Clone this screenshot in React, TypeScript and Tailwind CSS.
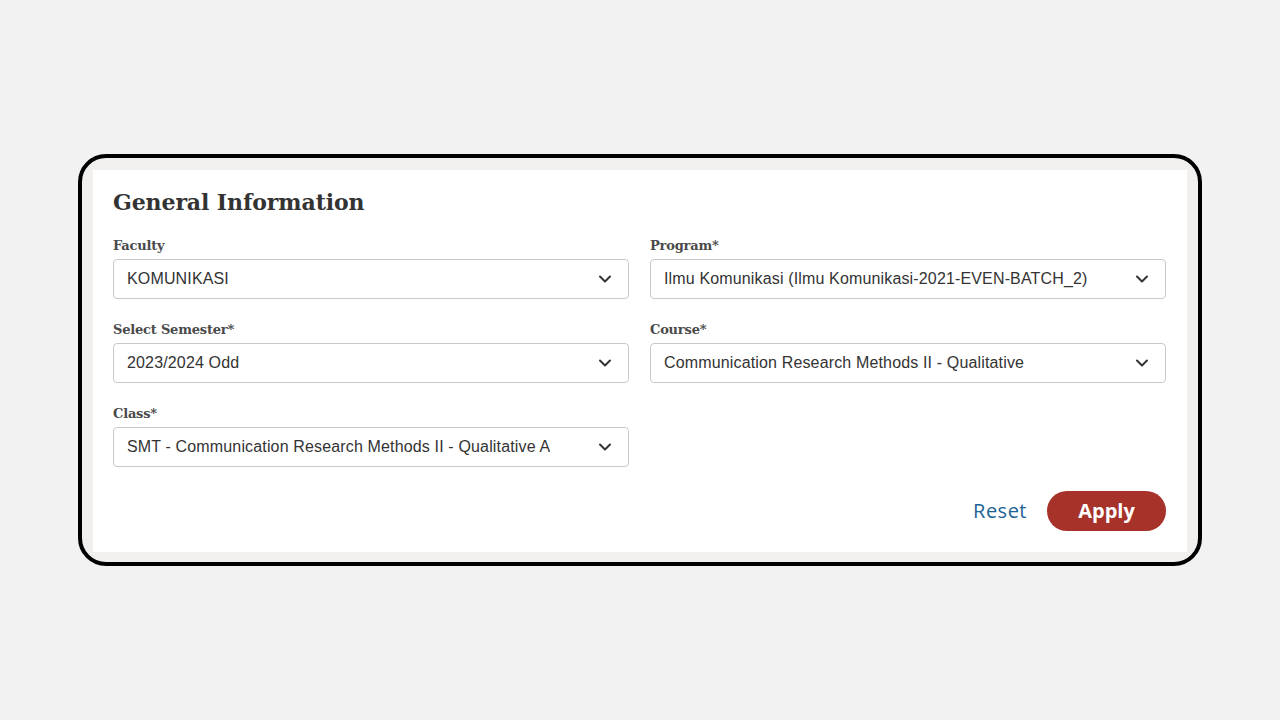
import { ChevronDown } from 'lucide-react';

const FIELDS = [
  { label: 'Faculty', value: 'KOMUNIKASI' },
  { label: 'Program*', value: 'Ilmu Komunikasi (Ilmu Komunikasi-2021-EVEN-BATCH_2)' },
  { label: 'Select Semester*', value: '2023/2024 Odd' },
  { label: 'Course*', value: 'Communication Research Methods II - Qualitative' },
  { label: 'Class*', value: 'SMT - Communication Research Methods II - Qualitative A' },
];

const slab = { fontFamily: '"DejaVu Serif", "Liberation Serif", serif' };

function SelectField({ label, value }: { label: string; value: string }) {
  return (
    <div className="flex flex-col">
      <label
        className="text-[13px] font-bold leading-[18px] text-[#4a4a4a] mb-[4px] tracking-[-0.2px]"
        style={slab}
      >
        {label}
      </label>
      <div className="h-[40px] flex items-center justify-between border border-[#c9c9c9] rounded-[4px] bg-white pl-[13px] pr-[14px]">
        <span className="text-[16px] text-[#333] tracking-[0.15px] font-['Liberation_Sans',Arial,sans-serif] truncate">
          {value}
        </span>
        <ChevronDown size={20} strokeWidth={2.4} className="text-[#333] shrink-0 translate-x-[1px]" />
      </div>
    </div>
  );
}

export default function App() {
  return (
    <div className="min-h-screen w-full bg-[#f2f2f2] flex items-start justify-center pt-[154px]">
      <div className="w-[1124px] border-[4px] border-black rounded-[28px] bg-[#f1f0ef] pl-[11px] pr-[11px] pt-[12px] pb-[10px]">
        <div className="bg-white pl-[20px] pr-[21px] pt-[16px] pb-[21px]">
          <h2 className="text-[22px] font-bold leading-[32px] text-[#333] tracking-[-0.1px]" style={slab}>
            General Information
          </h2>
          <div className="grid grid-cols-2 gap-x-[21px] gap-y-[22px] mt-[19px]">
            {FIELDS.map((f) => (
              <SelectField key={f.label} {...f} />
            ))}
          </div>
          <div className="flex justify-end items-center gap-[18px] mt-[24px]">
            <button className="text-[20px] text-[#1d6394] font-['Open_Sans',sans-serif] tracking-[0.5px] px-[2px]">
              Reset
            </button>
            <button className="h-[40px] w-[119px] rounded-full bg-[#a6322a] text-white text-[20px] font-bold font-['Open_Sans',sans-serif]">
              Apply
            </button>
          </div>
        </div>
      </div>
    </div>
  );
}
